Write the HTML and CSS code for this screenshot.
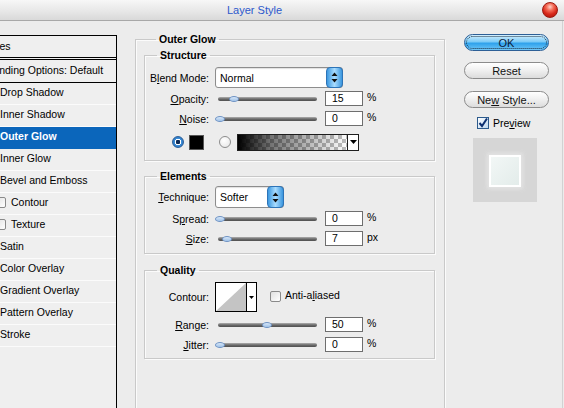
FILE: index.html
```html
<!DOCTYPE html>
<html>
<head>
<meta charset="utf-8">
<link rel="stylesheet" href="styles.css">
</head>
<body>
<div class="titlebar">
  <span class="title">Layer Style</span>
  <span class="close"></span>
</div>
<div class="content">
  <div class="styles">
    <div class="list-head">Styles</div>
    <div class="list-blend">Blending Options: Default</div>
    <div class="item">Drop Shadow</div>
    <div class="item">Inner Shadow</div>
    <div class="item selected">Outer Glow</div>
    <div class="item">Inner Glow</div>
    <div class="item">Bevel and Emboss</div>
    <div class="item sub"><span class="lcheck"></span><span>Contour</span></div>
    <div class="item sub"><span class="lcheck"></span><span>Texture</span></div>
    <div class="item">Satin</div>
    <div class="item">Color Overlay</div>
    <div class="item">Gradient Overlay</div>
    <div class="item">Pattern Overlay</div>
    <div class="item">Stroke</div>
  </div>

  <div class="main">
    <fieldset class="outer">
      <legend>Outer Glow</legend>

      <fieldset class="group structure">
        <legend>Structure</legend>
        <div class="row r-select">
          <span class="label">B<u>l</u>end Mode:</span>
          <div class="select wide"><span class="sel-text">Normal</span><span class="spin"><svg width="7" height="11" viewBox="0 0 7 11"><path d="M3.5 0.5 L6.5 4 L0.5 4 Z M3.5 10.5 L6.5 7 L0.5 7 Z" fill="#111"/></svg></span></div>
        </div>
        <div class="row r-slider r1">
          <span class="label"><u>O</u>pacity:</span>
          <div class="slider"><div class="track"></div><div class="thumb" style="left:14px"></div></div>
          <div class="num">15</div><span class="unit">%</span>
        </div>
        <div class="row r-slider r2">
          <span class="label"><u>N</u>oise:</span>
          <div class="slider"><div class="track"></div><div class="thumb" style="left:0px"></div></div>
          <div class="num">0</div><span class="unit">%</span>
        </div>
        <div class="row r-swatch">
          <span class="radio on"></span>
          <span class="swatch"></span>
          <span class="radio off"></span>
          <div class="gradbox"><div class="grad"></div><div class="drop"><svg width="7" height="4" viewBox="0 0 7 4"><path d="M0 0 H7 L3.5 4 Z" fill="#000"/></svg></div></div>
        </div>
      </fieldset>

      <fieldset class="group elements">
        <legend>Elements</legend>
        <div class="row r-select tech">
          <span class="label"><u>T</u>echnique:</span>
          <div class="select narrow"><span class="sel-text">Softer</span><span class="spin"><svg width="7" height="11" viewBox="0 0 7 11"><path d="M3.5 0.5 L6.5 4 L0.5 4 Z M3.5 10.5 L6.5 7 L0.5 7 Z" fill="#111"/></svg></span></div>
        </div>
        <div class="row r-slider r1">
          <span class="label">S<u>p</u>read:</span>
          <div class="slider"><div class="track"></div><div class="thumb" style="left:0px"></div></div>
          <div class="num">0</div><span class="unit">%</span>
        </div>
        <div class="row r-slider r2">
          <span class="label"><u>S</u>ize:</span>
          <div class="slider"><div class="track"></div><div class="thumb" style="left:7px"></div></div>
          <div class="num">7</div><span class="unit">px</span>
        </div>
      </fieldset>

      <fieldset class="group quality">
        <legend>Quality</legend>
        <div class="row r-contour">
          <span class="label">Contour:</span>
          <div class="contour">
            <div class="curve"><svg width="30" height="28" viewBox="0 0 30 28"><path d="M0 28 L30 0 L30 28 Z" fill="#c4c4c4"/></svg></div>
            <div class="drop"><svg width="5" height="3" viewBox="0 0 5 3"><path d="M0 0 H5 L2.5 3 Z" fill="#000"/></svg></div>
          </div>
          <span class="check"></span>
          <span class="check-text">Anti-a<u>l</u>iased</span>
        </div>
        <div class="row r-slider r1">
          <span class="label"><u>R</u>ange:</span>
          <div class="slider"><div class="track"></div><div class="thumb" style="left:47px"></div></div>
          <div class="num">50</div><span class="unit">%</span>
        </div>
        <div class="row r-slider r2">
          <span class="label"><u>J</u>itter:</span>
          <div class="slider"><div class="track"></div><div class="thumb" style="left:0px"></div></div>
          <div class="num">0</div><span class="unit">%</span>
        </div>
      </fieldset>
    </fieldset>
  </div>

  <div class="side">
    <div class="btn ok"><span class="focus">OK</span></div>
    <div class="btn reset">Reset</div>
    <div class="btn newstyle"><span>Ne<u>w</u> Style...</span></div>
    <div class="preview-row">
      <svg class="pcheck" width="12" height="12" viewBox="0 0 12 12">
        <defs><linearGradient id="cb" x1="0" y1="0" x2="1" y2="1"><stop offset="0" stop-color="#ffffff"/><stop offset="1" stop-color="#bcd6ee"/></linearGradient></defs>
        <rect x="0.5" y="0.5" width="11" height="11" fill="url(#cb)" stroke="#2c5a8c"/>
        <path d="M2.5 6 L5 9 L10 1.5" fill="none" stroke="#0d2f70" stroke-width="2"/>
      </svg>
      <span>Pre<u>v</u>iew</span>
    </div>
    <div class="preview"><div class="preview-inner"></div></div>
  </div>
</div>
</body>
</html>
```
FILE: styles.css
```css
* { box-sizing: border-box; }
html, body { margin: 0; padding: 0; }
body {
  width: 564px;
  height: 408px;
  overflow: hidden;
  background: #ececec;
  font-family: "Liberation Sans", Arial, sans-serif;
  font-size: 10.5px;
  color: #000;
}
u { text-decoration: underline; text-underline-offset: 1px; }

.titlebar {
  height: 21px;
  background: linear-gradient(#f7f7f7, #e6e6e6 60%, #d9d9d9);
  border-bottom: 1px solid #a8a8a8;
  display: flex;
  align-items: center;
  padding-left: 227px;
  padding-right: 6px;
}
.title { color: #2c58cc; font-size: 11px; }
.close {
  margin-left: auto;
  width: 16px;
  height: 16px;
  border-radius: 50%;
  border: 1px solid #9b1a10;
  background: radial-gradient(circle at 50% 28%, #ffd0c6 0, #f36a55 30%, #d8281a 60%, #a41408 100%);
}

.content { display: flex; height: 387px; overflow: hidden; }

/* left list */
.styles {
  flex: none;
  width: 139px;
  margin-left: -22px;
  margin-top: 14px;
  border-top: 1px solid #000;
  border-right: 1px solid #000;
  background: #efefef;
}
.list-head {
  height: 22px;
  line-height: 20px;
  padding-left: 4px;
  border-bottom: 1px solid #000;
  margin-bottom: 1px;
}
.list-blend {
  height: 24px;
  line-height: 21px;
  padding-left: 6px;
  border-top: 1px solid #000;
  border-bottom: 1px solid #000;
}
.item {
  height: 22px;
  padding-left: 22px;
  padding-bottom: 3px;
  border-bottom: 1px solid #fbfbfb;
  display: flex;
  align-items: center;
}
.item.selected {
  background: #0b66bb;
  color: #fff;
  font-weight: bold;
  border-bottom-color: #0b66bb;
}
.item.sub { padding-left: 17px; }
.lcheck {
  width: 11px;
  height: 11px;
  border: 1px solid #8a8a8a;
  border-radius: 2px;
  background: linear-gradient(135deg, #e2e2e2, #fff);
  margin-right: 5px;
}

/* main panel */
.main { flex: none; width: 310px; margin-left: 18px; }
fieldset {
  margin: 0;
  padding: 0;
  border: 1px solid #c9c9c9;
  box-shadow: inset 1px 1px 0 #fbfbfb, 1px 1px 0 #fbfbfb;
  min-width: 0;
}
legend {
  font-weight: bold;
  line-height: 12px;
  padding: 0 3px;
  margin-left: 12px;
}
fieldset.outer {
  margin-top: 12px;
  height: 375px;
  border-bottom-width: 0;
  padding: 4px 9px 0 8px;
}
.structure { padding: 6px 0 10px 0; }
.elements { margin-top: 9px; padding: 4px 0 7px 0; }
.quality { margin-top: 10px; padding: 6px 0 6px 0; }
.group legend { margin-left: 12px; }

.row { display: flex; align-items: center; }
.label { width: 64px; text-align: right; margin-right: 6px; flex: none; }
.r-slider { height: 15px; }
.structure .r1 { margin-top: 3px; }
.structure .r2 { margin-top: 5px; }
.elements .r1 { margin-top: 3px; }
.elements .r2 { margin-top: 5px; }
.quality .r1, .quality .r2 { margin-top: 5px; }

.select {
  height: 21px;
  border: 1px solid #8d8d8d;
  border-radius: 3px;
  background: #fff;
  display: flex;
  align-items: center;
  justify-content: space-between;
  padding-left: 4px;
  box-shadow: inset 0 1px 1px #e0e0e0;
}
.select.wide { width: 128px; }
.select.narrow { width: 69px; height: 22px; }
.spin {
  width: 17px;
  height: 21px;
  margin-right: -1px;
  border-radius: 4px;
  border: 1px solid #2d74b8;
  background: linear-gradient(90deg, #3b98e0, #a9dcff 50%, #3a96de);
  display: flex;
  align-items: center;
  justify-content: center;
}
.select.narrow .spin { height: 22px; }

.slider { position: relative; width: 104px; height: 15px; flex: none; }
.track {
  position: absolute;
  left: 3px;
  top: 6px;
  width: 99px;
  height: 4px;
  border-radius: 2px;
  background: linear-gradient(#b0b0b0, #6b6b6b 50%, #4f4f4f);
}
.thumb {
  position: absolute;
  top: 5px;
  width: 10px;
  height: 6px;
  border-radius: 5px / 3px;
  border: 1px solid #6f93c4;
  background: linear-gradient(#d9e9fa, #9fc1e6);
}
.num {
  width: 38px;
  height: 15px;
  margin-left: 6px;
  border: 1px solid #6e6e6e;
  background: #fff;
  padding-left: 6px;
  line-height: 13px;
  font-size: 10.5px;
}
.unit { margin-left: 4px; margin-top: -4px; }

.r-swatch { margin-top: 8px; height: 16px; padding-left: 27px; }
.radio {
  width: 12px;
  height: 12px;
  border-radius: 50%;
  flex: none;
}
.radio.on {
  background: radial-gradient(circle, #0d2a55 0 2px, #ffffff 2.5px 3px, #3c8ed8 3.5px, #2a6fb8 6px);
  border: 1px solid #2a5f9a;
}
.radio.off {
  margin-left: 15px;
  border: 1px solid #8c8c8c;
  background: radial-gradient(circle at 40% 35%, #ffffff, #e4e4e4);
}
.swatch { width: 15px; height: 15px; background: #000; margin-left: 5px; border: 1px solid #555; }
.gradbox {
  margin-left: 6px;
  width: 122px;
  height: 17px;
  border: 1px solid #1e1e1e;
  display: flex;
  background: #fff;
}
.grad {
  flex: 1;
  background:
    linear-gradient(to right, #000 0%, rgba(0,0,0,0.55) 30%, rgba(0,0,0,0) 100%),
    conic-gradient(#bdbdbd 25%, #ffffff 0 50%, #bdbdbd 0 75%, #ffffff 0) 0 0 / 8px 8px;
}
.gradbox .drop {
  width: 11px;
  border-left: 1px solid #1e1e1e;
  display: flex;
  align-items: center;
  justify-content: center;
}

.r-contour { height: 30px; }
.contour {
  width: 42px;
  height: 30px;
  border: 1px solid #000;
  display: flex;
  background: #fff;
}
.curve { width: 30px; height: 28px; }
.curve svg { display: block; }
.contour .drop {
  width: 10px;
  border-left: 1px solid #000;
  display: flex;
  align-items: center;
  justify-content: center;
}
.check {
  margin-left: 13px;
  width: 11px;
  height: 11px;
  border: 1px solid #8a8a8a;
  border-radius: 2px;
  background: linear-gradient(135deg, #e0e0e0, #fff);
  align-self: flex-start;
  margin-top: 9px;
}
.check-text { margin-left: 4px; align-self: flex-start; margin-top: 7px; }

/* right side */
.side {
  flex: none;
  width: 118px;
  border-right: 1px solid #d2d2d2;
  padding: 13px 0 0 19px;
}
.btn {
  width: 85px;
  height: 17px;
  border-radius: 9px;
  border: 1px solid #8b8b8b;
  background: linear-gradient(#ffffff, #f1f1f1 45%, #dcdcdc);
  display: flex;
  align-items: center;
  justify-content: center;
  font-size: 11px;
  color: #111;
}
.btn.ok {
  border-color: #2d5f96;
  background: linear-gradient(#d4f0ff, #7ccbf7 45%, #2fa2ec 55%, #6fc6f7);
  padding: 1px;
}
.btn.ok .focus {
  width: 100%;
  height: 100%;
  border: 1px dotted #1a2a3a;
  border-radius: 7px;
  display: flex;
  align-items: center;
  justify-content: center;
  color: #0e1c3a;
}
.btn.reset { margin-top: 11px; }
.btn.newstyle { margin-top: 12px; }
.preview-row {
  margin-top: 9px;
  margin-left: 13px;
  display: flex;
  align-items: center;
  height: 12px;
}
.pcheck { display: block; margin-right: 4px; }
.preview {
  margin-top: 9px;
  margin-left: 9px;
  width: 64px;
  height: 64px;
  background: #d6d6d6;
  padding: 17px 16px 16px 16px;
}
.preview-inner {
  width: 32px;
  height: 32px;
  border: 2px solid #ffffff;
  background: linear-gradient(135deg, #f2f7f6, #e3ecea);
  box-shadow: 0 0 4px 2px #e4e4e4;
}
```
